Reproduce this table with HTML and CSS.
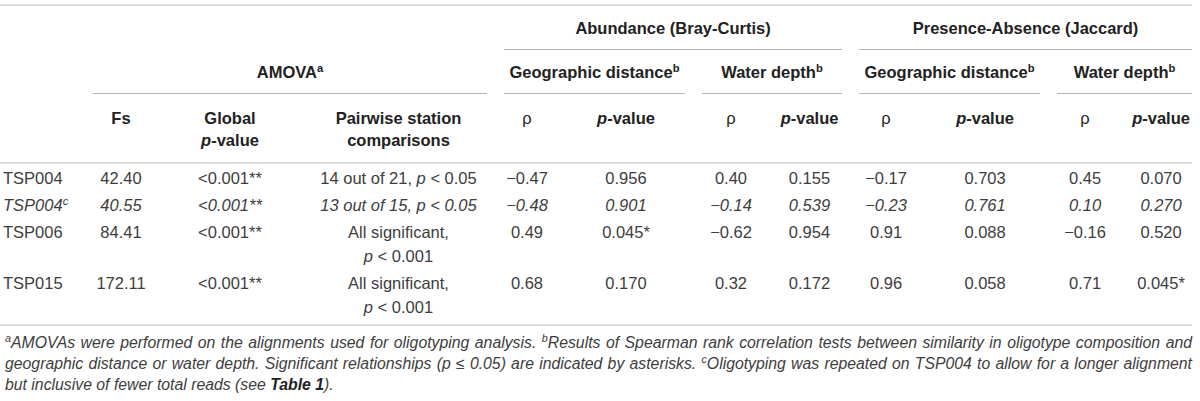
FILE: index.html
```
<!DOCTYPE html>
<html lang="en">
<head>
  <meta charset="UTF-8" />
  <title>Table 2 - AMOVA and Mantel results</title>
  <link rel="stylesheet" href="styles.css">
</head>
<body>
  <div class="table-wrap">
    <table class="results">
      <colgroup>
        <col class="c-label"><col class="c-fs"><col class="c-global"><col class="c-pair">
        <col class="c-a-geo-r"><col class="c-a-geo-p"><col class="c-a-wat-r"><col class="c-a-wat-p">
        <col class="c-p-geo-r"><col class="c-p-geo-p"><col class="c-p-wat-r"><col class="c-p-wat-p">
      </colgroup>
      <thead>
        <!-- group titles -->
        <tr class="row-group">
          <th colspan="4"></th>
          <th colspan="4"><div class="rule">Abundance (Bray-Curtis)</div></th>
          <th colspan="4"><div class="rule">Presence-Absence (Jaccard)</div></th>
        </tr>
        <tr class="row-group">
          <th></th>
          <th colspan="3"><div class="rule">AMOVA<sup>a</sup></div></th>
          <th colspan="2"><div class="rule">Geographic distance<sup>b</sup></div></th>
          <th colspan="2"><div class="rule">Water depth<sup>b</sup></div></th>
          <th colspan="2"><div class="rule">Geographic distance<sup>b</sup></div></th>
          <th colspan="2"><div class="rule">Water depth<sup>b</sup></div></th>
        </tr>
        <!-- column titles -->
        <tr class="row-cols">
          <th></th>
          <th>Fs</th>
          <th>Global<br><i>p</i>-value</th>
          <th class="pair">Pairwise station<br>comparisons</th>
          <th class="rho">ρ</th>
          <th><i>p</i>-value</th>
          <th class="rho">ρ</th>
          <th><i>p</i>-value</th>
          <th class="rho">ρ</th>
          <th><i>p</i>-value</th>
          <th class="rho">ρ</th>
          <th><i>p</i>-value</th>
        </tr>
      </thead>
      <tbody>
        <tr>
          <td class="label">TSP004</td>
          <td>42.40</td>
          <td>&lt;0.001**</td>
          <td class="pair">14 out of 21, <i>p</i> &lt; 0.05</td>
          <td>−0.47</td>
          <td>0.956</td>
          <td>0.40</td>
          <td>0.155</td>
          <td>−0.17</td>
          <td>0.703</td>
          <td>0.45</td>
          <td>0.070</td>
        </tr>
        <tr class="alt">
          <td class="label">TSP004<sup>c</sup></td>
          <td>40.55</td>
          <td>&lt;0.001**</td>
          <td class="pair">13 out of 15, p &lt; 0.05</td>
          <td>−0.48</td>
          <td>0.901</td>
          <td>−0.14</td>
          <td>0.539</td>
          <td>−0.23</td>
          <td>0.761</td>
          <td>0.10</td>
          <td>0.270</td>
        </tr>
        <tr>
          <td class="label">TSP006</td>
          <td>84.41</td>
          <td>&lt;0.001**</td>
          <td class="pair">All significant,<br><i>p</i> &lt; 0.001</td>
          <td>0.49</td>
          <td>0.045*</td>
          <td>−0.62</td>
          <td>0.954</td>
          <td>0.91</td>
          <td>0.088</td>
          <td>−0.16</td>
          <td>0.520</td>
        </tr>
        <tr>
          <td class="label">TSP015</td>
          <td>172.11</td>
          <td>&lt;0.001**</td>
          <td class="pair">All significant,<br><i>p</i> &lt; 0.001</td>
          <td>0.68</td>
          <td>0.170</td>
          <td>0.32</td>
          <td>0.172</td>
          <td>0.96</td>
          <td>0.058</td>
          <td>0.71</td>
          <td>0.045*</td>
        </tr>
      </tbody>
    </table>

    <p class="notes">
      <sup>a</sup>AMOVAs were performed on the alignments used for oligotyping analysis. <sup>b</sup>Results of Spearman rank correlation tests between similarity in oligotype composition and geographic distance or water depth. Significant relationships (p ≤ 0.05) are indicated by asterisks. <sup>c</sup>Oligotyping was repeated on TSP004 to allow for a longer alignment but inclusive of fewer total reads (see <b>Table 1</b>).
    </p>
  </div>
</body>
</html>
```

FILE: styles.css
```
* { box-sizing: border-box; margin: 0; padding: 0; }
body {
  font-family: 'Liberation Sans', Arial, sans-serif;
  background: #fff;
  color: #3d3d3d;
  overflow: hidden;
}
.table-wrap {
  width: 1192px;
  padding-top: 4px;
}
.results {
  width: 1192px;
  table-layout: fixed;
  border-collapse: collapse;
  border-top: 2px solid #dedede;
  font-size: 16.5px;
}
.c-label { width: 76px; }
.c-fs { width: 90px; }
.c-global { width: 128px; }
.c-pair { width: 193px; }
.c-a-geo-r { width: 80px; }
.c-a-geo-p { width: 118px; }
.c-a-wat-r { width: 92px; }
.c-a-wat-p { width: 65px; }
.c-p-geo-r { width: 88px; }
.c-p-geo-p { width: 110px; }
.c-p-wat-r { width: 90px; }
.c-p-wat-p { width: 62px; }

sup {
  font-size: 0.68em;
  line-height: 0;
  vertical-align: super;
}

/* header */
th {
  padding: 0;
  font-weight: bold;
  color: #222;
  text-align: center;
  white-space: nowrap;
}
.row-group th {
  vertical-align: bottom;
}
.rule {
  margin-left: 17px;
  padding: 10px 0 9px;
  line-height: 24px;
  border-bottom: 1px solid #b4b4b4;
}
.row-cols th {
  vertical-align: top;
  line-height: 22px;
  padding: 13px 0 11px;
  border-bottom: 2px solid #dedede;
}
.row-cols th.rho {
  font-weight: normal;
}
th.pair, td.pair {
  padding-left: 16px;
}

/* body */
td {
  padding: 2px 0 1px;
  line-height: 24px;
  text-align: center;
  vertical-align: top;
  white-space: nowrap;
}
td.label {
  text-align: left;
  padding-left: 3px;
}
tbody tr:first-child td { padding-top: 2px; }
tbody tr:last-child td {
  padding-bottom: 5px;
  border-bottom: 2px solid #dedede;
}
tr.alt td { font-style: italic; }

/* footnotes */
.notes {
  margin-top: 6px;
  padding-left: 5px;
  font-size: 15.8px;
  line-height: 21px;
  font-style: italic;
  text-align: justify;
  color: #3d3d3d;
}
.notes b { color: #222; }
```
